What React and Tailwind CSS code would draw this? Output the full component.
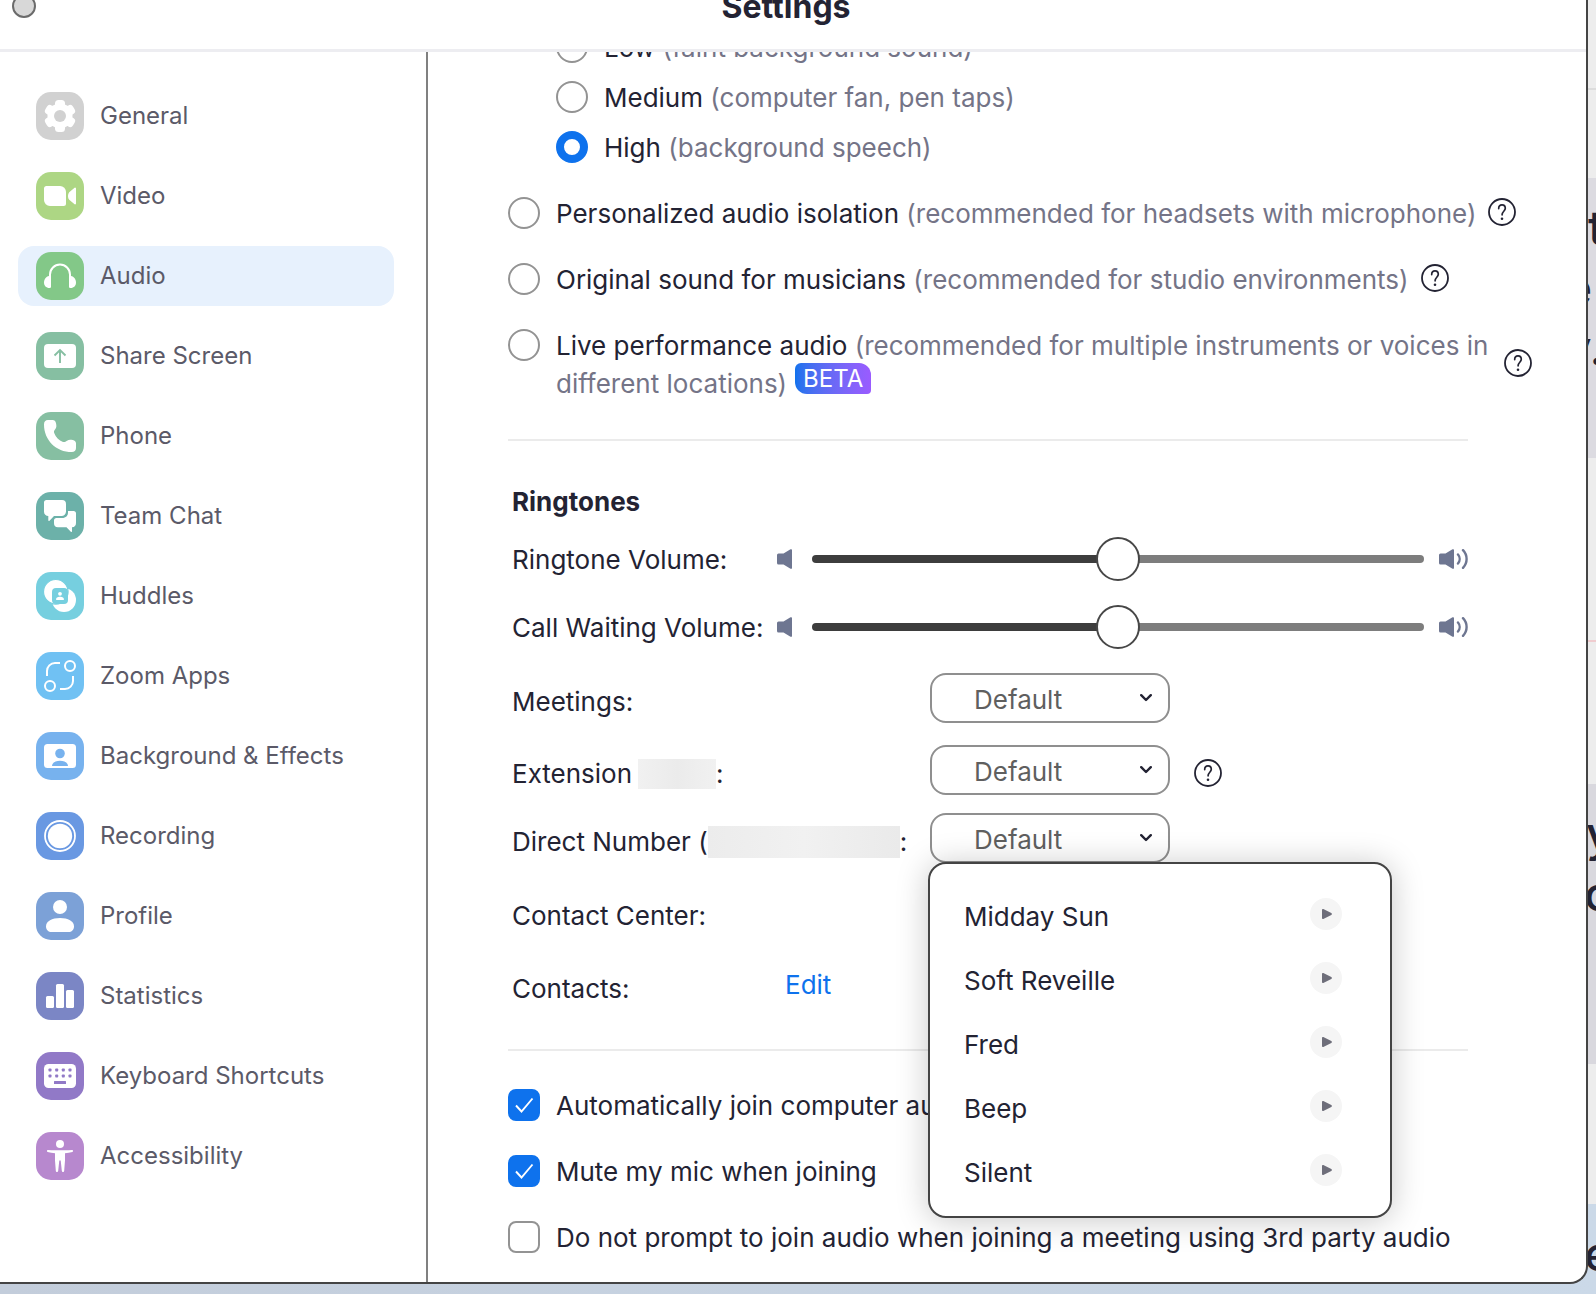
import React from "react";

function Tile({ className, children }) {
  return (
    <svg
      viewBox="0 0 48 48"
      aria-hidden="true"
      className={`size-12 shrink-0 rounded-[15px] ${className}`}
      fill="#fff"
      stroke="none"
    >
      {children}
    </svg>
  );
}

const NAV = [
  {
    label: "General",
    tile: "bg-[#d1d1d1] text-[#d1d1d1]",
    icon: (
      <>
        <circle cx="24" cy="24" r="12.5" />
        <rect x="19" y="8" width="10" height="32" rx="3.5" />
        <rect x="19" y="8" width="10" height="32" rx="3.5" transform="rotate(60 24 24)" />
        <rect x="19" y="8" width="10" height="32" rx="3.5" transform="rotate(120 24 24)" />
        <circle cx="24" cy="24" r="6" fill="currentColor" />
      </>
    ),
  },
  {
    label: "Video",
    tile: "bg-[#add684]",
    icon: (
      <>
        <path d="M10.500 14H24a6 6 0 0 1 6 6v11.500a2.500 2.500 0 0 1-2.500 2.500H14a6 6 0 0 1-6-6V16.500A2.500 2.500 0 0 1 10.500 14z" />
        <path d="M33.200 20.200 38.600 15.700a.9.9 0 0 1 1.400.7v15.200a.9.900 0 0 1-1.400.7l-5.400-4.500c-1.600-1.800-1.600-5.800 0-7.600z" />
      </>
    ),
  },
  {
    label: "Audio",
    active: true,
    tile: "bg-[#83c888]",
    icon: (
      <>
        <path d="M14 27v-4.500a10 10 0 0 1 20 0V27" fill="none" stroke="#fff" strokeWidth="2" />
        <path d="M13 24h2v10.500c0 1-.7 1.500-1.500 1.500C10 36 8 33.500 8 30.500S10 24.500 13 24z" />
        <path d="M35 24h-2v10.500c0 1 .7 1.500 1.500 1.500 3.500 0 5.500-2.500 5.500-5.500S38 24.500 35 24z" />
      </>
    ),
  },
  {
    label: "Share Screen",
    tile: "bg-[#86bfa2] text-[#86bfa2]",
    icon: (
      <>
        <rect x="8" y="12" width="32" height="24" rx="4" />
        <path d="M24 31V18.500M18.500 23.500l5.500-5.500 5.500 5.500" fill="none" stroke="currentColor" strokeWidth="1.900" />
      </>
    ),
  },
  {
    label: "Phone",
    tile: "bg-[#86bfa2]",
    icon: (
      <path d="M12 8h4.500c2 0 3 1.200 3.500 3.200.6 2.500.6 4-.6 5.800-1.200 1.600-1.800 2.600-1.200 4 1.600 4.200 4.600 7.200 8.800 8.900 1.400.5 2.400 0 4-1.200 1.800-1.200 3.400-1.200 5.800-.6 2 .5 3.200 1.500 3.200 3.500V36c0 2.600-1.600 4-4.200 4C20 40 8 28 8 12.400 8 9.600 9.400 8 12 8z" />
    ),
  },
  {
    label: "Team Chat",
    tile: "bg-[#6cb1a9]",
    icon: (
      <>
        <path d="M10.500 8H26a4 4 0 0 1 4 4v7.500a4.500 4.500 0 0 1-4.500 4.500H18l-4.500 4.700c-.6.6-1.200.3-1.200-.5V24A4.300 4.300 0 0 1 8 19.700V10.500A2.500 2.500 0 0 1 10.500 8z" />
        <path d="M32 19h5.500a2.500 2.500 0 0 1 2.500 2.500V31a4.300 4.300 0 0 1-4 4.300v4c0 .8-.6 1-1.200.4L30.500 35.300H22a4 4 0 0 1-4-4V28.500A2.500 2.500 0 0 1 20.500 26H26c4 0 6-2.500 6-5.500z" />
      </>
    ),
  },
  {
    label: "Huddles",
    tile: "bg-[#76cfdf] text-[#76cfdf]",
    icon: (
      <>
        <circle cx="28" cy="28" r="12" />
        <circle cx="19.800" cy="19.800" r="12.300" stroke="currentColor" strokeWidth="1.200" />
        <rect x="16" y="16" width="16" height="16" rx="4" fill="currentColor" />
        <circle cx="24" cy="21.800" r="1.900" />
        <path d="M20.200 28c-.6-2 1.500-3.200 3.800-3.200s4.400 1.200 3.800 3.200z" />
      </>
    ),
  },
  {
    label: "Zoom Apps",
    tile: "bg-[#70c1f3]",
    icon: (
      <g fill="none" stroke="#fff" strokeWidth="2">
        <path d="M11 24v-5a8 8 0 0 1 8-8h5M37 24v5a8 8 0 0 1-8 8h-5" />
        <circle cx="34" cy="14" r="5" />
        <circle cx="14" cy="34" r="5" />
      </g>
    ),
  },
  {
    label: "Background & Effects",
    tile: "bg-[#77b2ee] text-[#77b2ee]",
    icon: (
      <>
        <rect x="8" y="12" width="32" height="24" rx="3.500" />
        <circle cx="24" cy="21.500" r="4.800" fill="currentColor" />
        <path d="M16 34c0-3.400 4-5.200 8-5.200s8 1.800 8 5.200z" fill="currentColor" />
      </>
    ),
  },
  {
    label: "Recording",
    tile: "bg-[#6998e2]",
    icon: (
      <>
        <circle cx="24" cy="24" r="15" fill="none" stroke="#fff" strokeWidth="1.800" />
        <circle cx="24" cy="24" r="12.200" />
      </>
    ),
  },
  {
    label: "Profile",
    tile: "bg-[#7ca1d7]",
    icon: (
      <>
        <circle cx="24" cy="15" r="7" />
        <path d="M24 26c8 0 14 3 14 8.500 0 3.500-2.500 5.500-5.500 5.500h-17c-3 0-5.500-2-5.500-5.500C10 29 16 26 24 26z" />
      </>
    ),
  },
  {
    label: "Statistics",
    tile: "bg-[#7b86c5]",
    icon: (
      <>
        <rect x="10" y="24" width="8" height="12" rx="1.500" />
        <rect x="20" y="12" width="8" height="24" rx="1.500" />
        <rect x="30" y="18" width="8" height="18" rx="1.500" />
      </>
    ),
  },
  {
    label: "Keyboard Shortcuts",
    tile: "bg-[#9179c7] text-[#9179c7]",
    icon: (
      <>
        <rect x="8" y="12" width="32" height="24" rx="4.500" />
        <g fill="currentColor">
          {[14, 20.7, 27.3, 34].map((x) => (
            <React.Fragment key={x}>
              <rect x={x - 1.5} y="16.500" width="3" height="3" rx=".8" />
              <rect x={x - 1.5} y="22.500" width="3" height="3" rx=".8" />
            </React.Fragment>
          ))}
          <rect x="18" y="29" width="12" height="3" rx=".6" />
        </g>
      </>
    ),
  },
  {
    label: "Accessibility",
    tile: "bg-[#b788ce]",
    icon: (
      <>
        <circle cx="24" cy="12" r="4" />
        <path d="M11.800 18c4 .3 8 .2 12.200.2s8.200.1 12.200-.2c1 0 1.200 1.600.2 1.900-2.400.7-5 1.100-7.400 1.300v7.300l-.8 10.300c-.1 1.600-2.200 1.600-2.400 0L24.700 28.500h-1.400l-1.100 10.300c-.2 1.600-2.300 1.600-2.400 0L19 28.500v-7.300c-2.400-.2-5-.6-7.400-1.300-1-.3-.8-1.900.2-1.900z" />
      </>
    ),
  },
];

function Help({ about }) {
  return (
    <button type="button" aria-label={`Help: ${about}`} className="size-7 shrink-0 text-[#232333]">
      <svg viewBox="0 0 28 28" className="size-7" fill="none" stroke="currentColor" strokeLinecap="round" strokeLinejoin="round">
        <circle cx="14" cy="14" r="13" strokeWidth="1.800" />
        <path d="M10.700 10.600c0-2.300 1.300-3.700 3.300-3.700s3.300 1.400 3.300 3.400c0 2.900-3.200 3.100-3.200 6.500" strokeWidth="1.700" />
        <circle cx="14" cy="20.700" r="1.300" fill="currentColor" stroke="none" />
      </svg>
    </button>
  );
}

function Radio({ id, name, title, note, help, badge, defaultChecked }) {
  return (
    <div className="flex items-center gap-3">
      <div className="flex items-start gap-4">
        <input
          type="radio"
          id={id}
          name={name}
          defaultChecked={defaultChecked}
          className="mt-0.5 size-8 shrink-0 appearance-none rounded-full border-2 border-[#939393] bg-white checked:border-8 checked:border-[#0e72ed]"
        />
        <label htmlFor={id}>
          {title} <span className="text-[#747487]">({note})</span>
          {badge && (
            <span className="relative bottom-1.5 ml-2 inline-block rounded-tl-[6px] rounded-tr-[12px] rounded-br-[4px] rounded-bl-[12px] bg-linear-to-r from-[#0e72ed] to-[#9a5bff] px-2 text-[24px] leading-[31px] text-white">
              {badge}
            </span>
          )}
        </label>
      </div>
      {help && (
        <div className="flex shrink-0 pb-1">
          <Help about={title} />
        </div>
      )}
    </div>
  );
}

function SpeakerLow() {
  return (
    <svg viewBox="0 0 15 20" className="h-5 w-[15px] shrink-0" fill="#6e7691" aria-hidden="true">
      <path d="M1.500 4.500h5L13.500.300c.7-.4 1.500 0 1.500.8v17.800c0 .8-.8 1.200-1.500.8L6.500 15.500h-5A1.500 1.500 0 0 1 0 14V6a1.500 1.500 0 0 1 1.500-1.500z" />
    </svg>
  );
}

function SpeakerHigh() {
  return (
    <svg viewBox="0 0 29 20" className="h-5 w-[29px] shrink-0" aria-hidden="true">
      <path fill="#6e7691" d="M1.500 4.500h5L13.500.300c.7-.4 1.500 0 1.500.8v17.800c0 .8-.8 1.200-1.500.8L6.500 15.500h-5A1.500 1.500 0 0 1 0 14V6a1.500 1.500 0 0 1 1.500-1.500z" />
      <path d="M19 5.500c2.200 2.600 2.200 6.400 0 9M24 1.200c4.800 5 4.800 12.600 0 17.600" fill="none" stroke="#6e7691" strokeWidth="2.400" strokeLinecap="round" />
    </svg>
  );
}

function Volume({ id, label }) {
  return (
    <div className="flex items-center">
      <label htmlFor={id} className="w-[265px] shrink-0 pt-0.5">
        {label}
      </label>
      <SpeakerLow />
      <input
        id={id}
        type="range"
        min="0"
        max="100"
        defaultValue="50"
        className="mr-[15px] ml-5 h-11 min-w-0 flex-1 appearance-none bg-transparent [&::-webkit-slider-runnable-track]:h-2 [&::-webkit-slider-runnable-track]:rounded-full [&::-webkit-slider-runnable-track]:bg-linear-to-r [&::-webkit-slider-runnable-track]:from-[#3d3d3d] [&::-webkit-slider-runnable-track]:from-50% [&::-webkit-slider-runnable-track]:to-[#7d7d7d] [&::-webkit-slider-runnable-track]:to-50% [&::-webkit-slider-thumb]:-mt-[18px] [&::-webkit-slider-thumb]:size-11 [&::-webkit-slider-thumb]:appearance-none [&::-webkit-slider-thumb]:rounded-full [&::-webkit-slider-thumb]:border-2 [&::-webkit-slider-thumb]:border-solid [&::-webkit-slider-thumb]:border-[#474747] [&::-webkit-slider-thumb]:bg-white"
      />
      <SpeakerHigh />
    </div>
  );
}

function Tone({ id, label, menu, help, className }) {
  return (
    <div className={`flex h-[50px] items-center ${className}`}>
      <label htmlFor={id} className="flex w-[418px] shrink-0 items-center pt-2">
        {label}
      </label>
      <div className="relative">
        <select
          id={id}
          className="block h-[50px] w-60 appearance-none rounded-2xl border-2 border-[#8f8f8f] bg-white pt-1 pl-[42px] text-[#5f5f5f]"
        >
          <option>Default</option>
        </select>
        <svg viewBox="0 0 12 8" className="pointer-events-none absolute top-[21px] right-[18px] h-2 w-3" fill="none" stroke="#232333" strokeWidth="2.400" strokeLinecap="round" strokeLinejoin="round" aria-hidden="true">
          <path d="M1.200 1.200 6 6l4.800-4.800" />
        </svg>
        {menu}
      </div>
      {help && (
        <div className="ml-6 flex pt-1.5">
          <Help about="Extension" />
        </div>
      )}
    </div>
  );
}

function ToneMenu() {
  return (
    <ul className="absolute top-[49px] -left-0.5 z-10 w-[464px] rounded-[18px] border-2 border-[#444] bg-white pt-[18px] pb-3.5 shadow-[0_2px_32px_rgba(0,0,0,0.22)]">
      {["Midday Sun", "Soft Reveille", "Fred", "Beep", "Silent"].map((tone) => (
        <li key={tone} className="flex h-16 items-center justify-between pr-12 pl-[34px]">
          <button type="button" className="pt-1.5">{tone}</button>
          <button type="button" aria-label={`Play ${tone}`} className="flex size-8 items-center justify-center rounded-full bg-[#f5f5f5]">
            <svg viewBox="0 0 10 10" className="ml-0.5 size-2.5" fill="#6e6e7a">
              <path d="M0 1C0 .1 1-.200 1.800.2L9.300 4.100c.8.500.8 1.300 0 1.800L1.800 9.800C1 10.200 0 9.900 0 9z" />
            </svg>
          </button>
        </li>
      ))}
    </ul>
  );
}

function Check({ id, label, defaultChecked }) {
  return (
    <div className="flex items-start gap-4">
      <div className="relative mt-0.5 size-8 shrink-0">
        <input
          type="checkbox"
          id={id}
          defaultChecked={defaultChecked}
          className="peer block size-8 appearance-none rounded-lg border-2 border-[#939393] bg-white checked:border-[#0e72ed] checked:bg-[#0e72ed]"
        />
        <svg viewBox="0 0 32 32" className="pointer-events-none absolute inset-0 hidden size-8 peer-checked:block" fill="none" stroke="#fff" strokeWidth="1.900" aria-hidden="true">
          <path d="M8 16.500l5.500 6L24.500 9.500" />
        </svg>
      </div>
      <label htmlFor={id}>{label}</label>
    </div>
  );
}

function Backdrop() {
  return (
    <div aria-hidden="true" className="absolute inset-0 flex flex-col items-end overflow-hidden bg-linear-to-r from-[#c3cddb] to-[#cbd9e8] text-[48px] leading-[60px] font-medium text-[#232333]">
      <div className="h-[90px] w-12 border-b-2 border-[#dcdcdc] bg-[#ededed]" />
      <div className="h-[88px] w-12 bg-[#ededed]" />
      <div className="h-[280px] w-12 overflow-hidden bg-[#dcdbe1] pt-5">
        <p className="pl-10">t</p>
        <p className="pl-4">e</p>
        <p className="pl-4">y.</p>
      </div>
      <div className="h-[184px] w-12 border-b-2 border-[#f0cccf] bg-[#ededed]" />
      <div className="h-[142px] w-12 bg-[#ededed]" />
      <div className="h-[280px] w-12 overflow-hidden bg-[#d9d8de] pt-5">
        <p className="pl-[38px]">y</p>
        <p className="pl-9">o</p>
      </div>
      <div className="h-[140px] w-12 bg-[#ededed]" />
      <div className="w-12 flex-1 overflow-hidden pt-5">
        <p className="pl-9">e</p>
      </div>
    </div>
  );
}

export default function App() {
  return (
    <div className="relative flex min-h-screen overflow-hidden pr-2 pb-2.5 font-['Inter','Liberation_Sans',sans-serif] text-[24px] leading-[38px] text-[#232333]">
      <Backdrop />
      <div className="relative flex flex-1 flex-col overflow-hidden rounded-br-[18px] border-r-2 border-b-2 border-[#444] bg-white">
        <header className="relative flex h-[52px] justify-center overflow-hidden border-b-3 border-[#ededf1]">
          <button type="button" aria-label="Close" className="absolute -top-1.5 left-3 size-6 rounded-full border-2 border-[#6b6b6b] bg-[#d8d8d8]" />
          <h1 className="-mt-3 pr-3.5 text-[32px] font-bold">Settings</h1>
        </header>

        <div className="flex flex-1">
          <nav className="flex w-[428px] shrink-0 flex-col gap-5 border-r-2 border-[#808080] pt-[34px] pr-8 pl-[18px]">
            {NAV.map((item) => (
              <a
                key={item.label}
                href="#"
                aria-current={item.active ? "page" : undefined}
                className={`flex h-15 items-center gap-4 rounded-2xl pl-[18px] text-[#5b5a68] ${item.active ? "bg-[#e7f1fd]" : ""}`}
              >
                <Tile className={item.tile}>{item.icon}</Tile>
                {item.label}
              </a>
            ))}
          </nav>

          <main className="min-w-0 flex-1 overflow-hidden pr-[54px] pb-[25px] pl-20 text-[26px]">
            <div className="-mt-[23px] flex flex-col gap-3 pl-12">
              <Radio id="low" name="suppression" title="Low" note="faint background sound" />
              <Radio id="medium" name="suppression" title="Medium" note="computer fan, pen taps" />
              <Radio id="high" name="suppression" title="High" note="background speech" defaultChecked />
            </div>
            <div className="mt-7 flex flex-col gap-7">
              <Radio id="personal" name="profile" title="Personalized audio isolation" note="recommended for headsets with microphone" help />
              <Radio id="original" name="profile" title="Original sound for musicians" note="recommended for studio environments" help />
              <Radio id="live" name="profile" title="Live performance audio" note="recommended for multiple instruments or voices in different locations" badge="BETA" help />
            </div>

            <hr className="mt-9 mr-16 border-t-2 border-[#ebebeb]" />

            <section className="mr-16 pl-1">
              <h2 className="mt-[42px] font-bold">Ringtones</h2>
              <div className="mt-4 flex flex-col gap-6">
                <Volume id="ring-volume" label="Ringtone Volume:" />
                <Volume id="waiting-volume" label="Call Waiting Volume:" />
              </div>
              <Tone id="meetings" label="Meetings:" className="mt-6" />
              <Tone
                id="extension"
                className="mt-[22px]"
                help
                label={
                  <>
                    Extension
                    <span className="ml-1.5 h-[30px] w-[78px] bg-linear-to-r from-[#f1f1f1] via-[#ebebeb] to-[#f1f1f1]" />:
                  </>
                }
              />
              <Tone
                id="direct"
                className="mt-[18px]"
                menu={<ToneMenu />}
                label={
                  <>
                    Direct Number (
                    <span className="h-8 w-[192px] bg-linear-to-r from-[#ececec] via-[#f1f1f1] to-[#eaeaea]" />:
                  </>
                }
              />
              <div className="mt-6 flex h-[50px] items-center pt-2">Contact Center:</div>
              <div className="mt-[23px] flex h-[50px] items-center">
                <span className="w-[273px] shrink-0 pt-2">Contacts:</span>
                <a href="#" className="text-[#0e72ed]">Edit</a>
              </div>
            </section>

            <hr className="mt-[39px] mr-16 border-t-2 border-[#ebebeb]" />

            <div className="mt-9 flex flex-col gap-7">
              <Check id="auto-join" label="Automatically join computer audio when joining" defaultChecked />
              <Check id="mute-mic" label="Mute my mic when joining" defaultChecked />
              <Check id="no-prompt" label="Do not prompt to join audio when joining a meeting using 3rd party audio" />
            </div>
          </main>
        </div>
      </div>
    </div>
  );
}
